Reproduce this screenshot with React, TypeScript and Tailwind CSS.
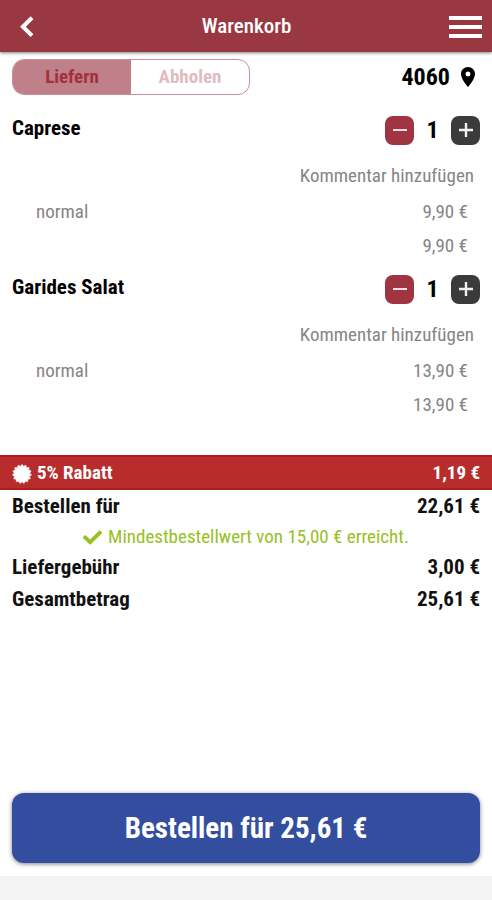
import { FaCheck } from "react-icons/fa";
import { MdLocationOn } from "react-icons/md";

const items = [
  { name: "Caprese", variant: "normal", price: "9,90 €", total: "9,90 €" },
  { name: "Garides Salat", variant: "normal", price: "13,90 €", total: "13,90 €" },
];

// outline of the discount badge: 15 teeth around a disc
const badgePoints = Array.from({ length: 30 }, (_, i) => {
  const radius = i % 2 === 0 ? 9.6 : 7.8;
  const angle = (i * Math.PI) / 15 - Math.PI / 2;
  return `${(10 + radius * Math.cos(angle)).toFixed(2)},${(10 + radius * Math.sin(angle)).toFixed(2)}`;
}).join(" ");

function Header() {
  return (
    <header className="relative flex h-[52px] shrink-0 items-center justify-between bg-[#9a3841] px-3 pt-0.5 text-white shadow-[0_1px_3px_rgba(0,0,0,0.5)]">
      <button aria-label="Zurück" className="flex w-8 justify-start pl-2">
        <svg viewBox="0 0 14 22" className="h-[22px] w-3.5" fill="none" stroke="currentColor" strokeWidth="4">
          <path d="M12 1.8 2.900 10.700l9.100 8.900" />
        </svg>
      </button>
      <h1 className="text-[21px] font-medium">Warenkorb</h1>
      <button aria-label="Menü" className="-mr-0.5 flex w-[33px] flex-col gap-[5px]">
        <span className="h-1 w-full bg-white" />
        <span className="h-1 w-full bg-white" />
        <span className="h-1 w-full bg-white" />
      </button>
    </header>
  );
}

function DeliveryRow() {
  return (
    <div className="flex h-[50px] items-center justify-between px-3">
      <div className="flex h-9 w-[238px] overflow-hidden rounded-xl border border-[#c78f99] text-[19px] font-bold">
        <button className="flex-1 bg-[#bf808a] text-[#a3303f]">Liefern</button>
        <button className="flex-1 text-[#dfbcc2]">Abholen</button>
      </div>
      <button className="flex items-center gap-1.5 text-2xl font-bold">
        4060
        <MdLocationOn className="size-6" />
      </button>
    </div>
  );
}

function CartItem({ item }: { item: (typeof items)[number] }) {
  return (
    <li className="text-[19px] text-[#858585]">
      <div className="flex h-[54px] items-center justify-between px-3 text-black">
        <h2 className="pb-0.5 text-[21px] font-bold">{item.name}</h2>
        <div className="flex items-center">
          <button aria-label="Weniger" className="flex size-[29px] items-center justify-center rounded-lg bg-[#a03440]">
            <span className="h-0.5 w-3.5 bg-[#f3dfe1]" />
          </button>
          <span className="w-[37px] text-center text-2xl font-bold">{1}</span>
          <button aria-label="Mehr" className="flex size-[29px] items-center justify-center rounded-lg bg-[#3b3b3b]">
            <svg viewBox="0 0 14 14" className="size-3.5" stroke="#f1f1f1" strokeWidth="2.4">
              <path d="M0 7h14M7 0v14" />
            </svg>
          </button>
        </div>
      </div>
      <div className="flex h-9 items-center justify-end px-[18px] pt-0.5">
        <button>Kommentar hinzufügen</button>
      </div>
      <div className="flex h-9 items-center justify-between pt-0.5 pr-6 pl-9">
        <span>{item.variant}</span>
        <span>{item.price}</span>
      </div>
      <div className="flex h-[33px] items-center justify-end pt-0.5 pr-6">{item.total}</div>
    </li>
  );
}

function SumRow({ label, value }: { label: string; value: string }) {
  return (
    <div className="flex h-8 items-center justify-between px-3 pt-0.5 text-[21px] font-bold text-[#111]">
      <span>{label}</span>
      <span>{value}</span>
    </div>
  );
}

export default function App() {
  return (
    <div className="flex min-h-screen flex-col bg-white font-['Roboto_Condensed','Liberation_Sans_Narrow',Roboto,sans-serif]">
      <Header />
      <main className="flex flex-1 flex-col">
        <DeliveryRow />
        <ul className="mt-px mb-[34px]">
          {items.map((item) => (
            <CartItem key={item.name} item={item} />
          ))}
        </ul>
        <div className="flex h-[35px] items-center justify-between border-y-2 border-[#b01c1e] bg-[#b82c2c] px-3 pt-0.5 text-[19px] font-bold text-white">
          <span className="flex items-center gap-[5px]">
            <svg viewBox="0 0 20 20" className="size-5" fill="currentColor" stroke="currentColor" strokeLinejoin="round" strokeWidth="0.6">
              <polygon points={badgePoints} />
            </svg>
            5% Rabatt
          </span>
          <span>1,19 €</span>
        </div>
        <SumRow label="Bestellen für" value="22,61 €" />
        <p className="flex h-[29px] items-center justify-center gap-1.5 pt-0.5 text-[19px] text-[#97c11f]">
          <FaCheck className="size-[19px]" />
          Mindestbestellwert von 15,00 € erreicht.
        </p>
        <SumRow label="Liefergebühr" value="3,00 €" />
        <SumRow label="Gesamtbetrag" value="25,61 €" />
        <div className="mt-auto px-3 pb-[13px]">
          <button className="h-[70px] w-full rounded-xl bg-[#334d9f] pt-0.5 text-[29px] font-bold text-white shadow-[0_1px_4px_rgba(0,0,0,0.5)]">
            Bestellen für 25,61 €
          </button>
        </div>
      </main>
      <footer className="h-6 bg-[#f3f3f3]" />
    </div>
  );
}
